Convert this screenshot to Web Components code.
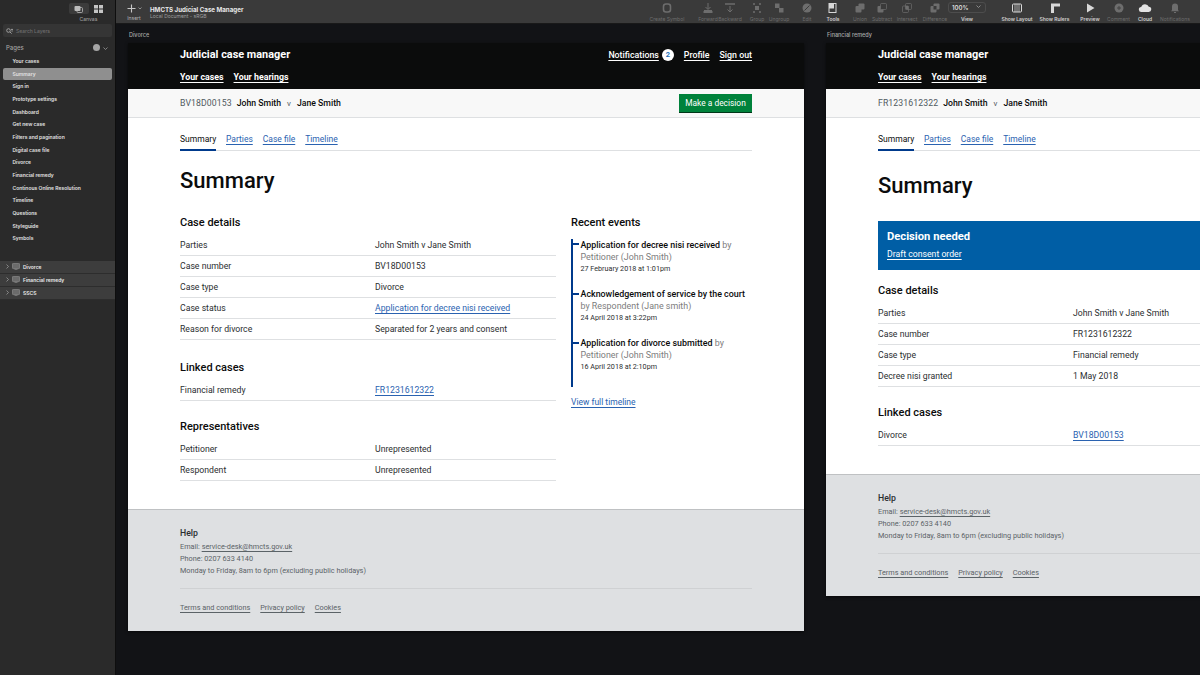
<!DOCTYPE html>
<html lang="en">
<head>
<meta charset="utf-8">
<title>HMCTS Judicial Case Manager</title>
<style>
  html, body { margin: 0; height: 100%; background: #121316; overflow: hidden; }
  body { font-family: Inter, "Liberation Sans", sans-serif; }
  .cols { display: flex; gap: 15px; align-items: flex-start; }
  .main { width: 376px; flex: none; display: flex; flex-direction: column; }
  .main.wide { width: 572px; }
  case-header { margin: 0 -52px; }
</style>
</head>
<body>
<sketch-app>
  <sketch-sidebar slot="side"></sketch-sidebar>
  <sketch-toolbar slot="top"></sketch-toolbar>
  <case-board slot="canvas" label="Divorce" style="left:12px">
    <case-header ref="BV18D00153" decision></case-header>
    <case-tabs title-top="16"></case-tabs>
    <div class="cols">
      <div class="main">
        <detail-list heading="Case details" rows='[["Parties","John Smith v Jane Smith"],["Case number","BV18D00153"],["Case type","Divorce"],["Case status","Application for decree nisi received","link"],["Reason for divorce","Separated for 2 years and consent"]]'></detail-list>
        <detail-list heading="Linked cases" rows='[["Financial remedy","FR1231612322","link"]]'></detail-list>
        <detail-list style="margin-top:17px" heading="Representatives" rows='[["Petitioner","Unrepresented"],["Respondent","Unrepresented"]]'></detail-list>
      </div>
      <recent-events></recent-events>
    </div>
    <case-footer slot="footer"></case-footer>
  </case-board>
  <case-board slot="canvas" label="Financial remedy" style="left:710px">
    <case-header ref="FR1231612322"></case-header>
    <case-tabs title-top="21"></case-tabs>
    <div class="cols">
      <div class="main wide">
        <decision-banner></decision-banner>
        <detail-list heading="Case details" rows='[["Parties","John Smith v Jane Smith"],["Case number","FR1231612322"],["Case type","Financial remedy"],["Decree nisi granted","1 May 2018"]]'></detail-list>
        <detail-list style="margin-top:17px" heading="Linked cases" rows='[["Divorce","BV18D00153","link"]]'></detail-list>
      </div>
    </div>
    <case-footer slot="footer"></case-footer>
  </case-board>
</sketch-app>

<script>
const font = 'Inter, "Liberation Sans", sans-serif';
const caseFont = 'Roboto, "Liberation Sans", sans-serif';
const linkBlue = "#2a62b0";

// small helper so each element is just styles + markup
function define(name, render) {
  customElements.define(name, class extends HTMLElement {
    constructor() {
      super();
      this.attachShadow({ mode: "open" });
    }
    connectedCallback() {
      this.shadowRoot.innerHTML = render(this);
    }
  });
}

define("sketch-app", () => `
<style>
  :host { display: grid; grid-template: 24px 1fr / 116px 1fr; width: 1200px; height: 675px; overflow: hidden; font-family: ${font}; }
  ::slotted([slot=side]) { grid-row: 1 / 3; }
  .canvas { position: relative; overflow: hidden; background: #121316; }
</style>
<slot name="side"></slot>
<slot name="top"></slot>
<div class="canvas"><slot name="canvas"></slot></div>`);

define("sketch-sidebar", () => {
  const pages = ["Your cases", "Summary", "Sign in", "Prototype settings", "Dashboard", "Get new case", "Filters and pagination", "Digital case file", "Divorce", "Financial remedy", "Continous Online Resolution", "Timeline", "Questions", "Styleguide", "Symbols"];
  const boards = ["Divorce", "Financial remedy", "SSCS"];
  return `
<style>
  :host { display: flex; flex-direction: column; background: #2a2a2a; border-right: 1px solid #0e0e0e; box-sizing: border-box; width: 116px; height: 675px; color: #dcdcdc; font-size: 5px; font-weight: 600; }
  .mode { height: 23px; display: grid; grid-template-columns: 20px 20px; justify-content: center; padding: 3px 0 0 62px; box-sizing: border-box; }
  .mode span { height: 11px; display: grid; place-items: center; border-radius: 2px; }
  .mode span.on { background: #3b3b3b; }
  .mode em { grid-column: 1 / 3; font-style: normal; font-weight: 500; color: #9c9c9c; text-align: center; margin-top: 1px; }
  .search { margin: 1px 3px 0; height: 13px; background: #353535; border-radius: 2px; display: flex; align-items: center; gap: 3px; padding-left: 3px; color: #6e6e6e; font-weight: 500; }
  .pages { display: flex; align-items: center; justify-content: space-between; padding: 2px 7px 0 6px; height: 16px; font-size: 6px; color: #a2a2a2; font-weight: 500; box-sizing: border-box; margin-top: 1px; }
  .pages i { display: inline-block; width: 7px; height: 7px; border-radius: 50%; background: #a5a5a5; margin-right: 3px; vertical-align: -1px; }
  ul { list-style: none; margin: 1px 0 0; padding: 0; }
  li { height: 12.67px; line-height: 12.67px; margin: 0 3px; padding-left: 9.5px; border-radius: 2px; color: #e2e2e2; white-space: nowrap; }
  li.sel { background: #8f8f8f; }
  .boards { margin-top: 16px; }
  .board { height: 13px; background: #3d3d3d; border-bottom: 1px solid #2d2d2d; box-sizing: border-box; display: flex; align-items: center; padding-left: 6px; gap: 3px; color: #ececec; }
  .board svg { flex: none; }
</style>
<div class="mode">
  <span class="on"><svg width="9" height="8" viewBox="0 0 9 8"><rect x="0.5" y="1" width="6" height="5" rx="1" fill="#bcbcbc"/><rect x="3" y="2.5" width="5.5" height="5" rx="1" fill="none" stroke="#bcbcbc" stroke-width=".8"/></svg></span>
  <span><svg width="9" height="8" viewBox="0 0 9 8" fill="#c4c4c4"><rect width="4" height="3.5"/><rect x="5" width="4" height="3.5"/><rect y="4.5" width="4" height="3.5"/><rect x="5" y="4.5" width="4" height="3.5"/></svg></span>
  <em>Canvas</em>
</div>
<div class="search">
  <svg width="7" height="6" viewBox="0 0 7 6" fill="none" stroke="#a8a8a8" stroke-width=".9"><circle cx="2.5" cy="2.5" r="1.8"/><path d="M4 4l1.6 1.6M5 1.4h2M5.4 3h1.4"/></svg>
  <span>Search Layers</span>
</div>
<div class="pages"><span>Pages</span><span><i></i><svg width="5" height="3" viewBox="0 0 5 3" fill="none" stroke="#9a9a9a" stroke-width=".8"><path d="M.5.5l2 2 2-2"/></svg></span></div>
<ul>${pages.map(p => `<li class="${p === "Summary" ? "sel" : ""}">${p}</li>`).join("")}</ul>
<div class="boards">
${boards.map(b => `<div class="board"><svg width="3" height="5" viewBox="0 0 3 5" fill="none" stroke="#a5a5a5" stroke-width=".7"><path d="M.5.5l2 2-2 2"/></svg><svg width="8" height="7" viewBox="0 0 8 7"><rect x=".4" y=".4" width="7.2" height="5.2" rx=".8" fill="#6b6b6b" stroke="#999" stroke-width=".6"/><path d="M2.5 6.6h3" stroke="#999" stroke-width=".6"/></svg><span>${b}</span></div>`).join("")}
</div>`;
});

const toolIcons = {
  symbol: `<rect x="3.5" y="2" width="7" height="8" rx="2.5" fill="none" stroke="currentColor" stroke-width="1.6"/>`,
  forward: `<path d="M7 1v6M4.5 5L7 7.5 9.5 5M2 10h10" fill="none" stroke="currentColor"/><rect x="3" y="8" width="8" height="3" fill="currentColor"/>`,
  backward: `<path d="M2 2h10" stroke="currentColor" stroke-width="1.5"/><path d="M7 4v6M4.5 7.5L7 10l2.5-2.5" fill="none" stroke="currentColor"/>`,
  group: `<path d="M3 2h2M9 2h2M3 10h2M9 10h2" stroke="currentColor" stroke-width="1.6"/><rect x="5" y="4" width="4" height="4" fill="currentColor"/>`,
  ungroup: `<rect x="3" y="1.5" width="4.5" height="4.5" fill="currentColor"/><rect x="7" y="6" width="4.5" height="4.5" fill="currentColor"/>`,
  edit: `<circle cx="7" cy="6" r="4.5" fill="currentColor"/><path d="M4.5 8.5l5-5" stroke="#3a3a3a"/>`,
  tools: `<rect x="3" y="1.5" width="7" height="9" fill="none" stroke="#d8d8d8"/><rect x="3" y="1.5" width="5" height="5" fill="#d8d8d8"/>`,
  union: `<rect x="2.5" y="4" width="6" height="6.5" rx="1" fill="currentColor"/><rect x="5.5" y="1.5" width="6" height="6" rx="1" fill="currentColor"/>`,
  subtract: `<rect x="2.5" y="4" width="6" height="6.5" rx="1" fill="currentColor"/><rect x="5.5" y="1.5" width="6" height="6" rx="1" fill="#3a3a3a" stroke="currentColor" stroke-width=".7"/>`,
  intersect: `<rect x="2.5" y="4" width="6" height="6.5" rx="1" fill="none" stroke="currentColor" stroke-width=".7"/><rect x="5.5" y="1.5" width="6" height="6" rx="1" fill="none" stroke="currentColor" stroke-width=".7"/><rect x="5.5" y="4" width="3" height="3.5" fill="currentColor"/>`,
  difference: `<rect x="2.5" y="4" width="6" height="6.5" rx="1" fill="currentColor"/><rect x="5.5" y="1.5" width="6" height="6" rx="1" fill="currentColor"/><rect x="5.5" y="4" width="3" height="3.5" fill="#3a3a3a"/>`,
  layout: `<rect x="2.5" y="2" width="9" height="8" rx="1" fill="#3a3a3a" stroke="#d8d8d8"/><path d="M5 2v8M7 2v8M9 2v8" stroke="#d8d8d8" stroke-width=".7"/>`,
  rulers: `<path d="M3 11V1.5h9v3H6V11z" fill="#d8d8d8"/>`,
  preview: `<path d="M4 1.5l7.5 4.5L4 10.5z" fill="#d8d8d8"/>`,
  comment: `<circle cx="7" cy="6" r="4.5" fill="currentColor"/><path d="M5 6h4M7 4v4" stroke="#3a3a3a" stroke-width=".8"/>`,
  cloud: `<path d="M3.5 10a2.5 2.5 0 0 1-.3-5A4 4 0 0 1 10.8 4.8 2.6 2.6 0 0 1 10.5 10z" fill="#e4e4e4"/>`,
  bell: `<path d="M7 1.5a3 3 0 0 1 3 3V8l1 1.2H3L4 8V4.5a3 3 0 0 1 3-3zM6 10h2v1H6z" fill="currentColor"/>`
};

define("sketch-toolbar", () => {
  // label, icon, width, margin-left, enabled
  const tools = [
    ["Create Symbol", "symbol", 40, 295],
    ["Forward", "forward", 22, 10],
    ["Backward", "backward", 22, 0],
    ["Group", "group", 22, 5],
    ["Ungroup", "ungroup", 22, 0],
    ["Edit", "edit", 22, 6],
    ["Tools", "tools", 22, 4, 1],
    ["Union", "union", 22, 5],
    ["Subtract", "subtract", 22, 0],
    ["Intersect", "intersect", 22, 3],
    ["Difference", "difference", 26, 4],
    ["View", "", 38, 0, 1],
    ["Show Layout", "layout", 32, 15, 1],
    ["Show Rulers", "rulers", 32, 5.5, 1],
    ["Preview", "preview", 24, 7.5, 1],
    ["Comment", "comment", 26, 3.5],
    ["Cloud", "cloud", 20, 3.5, 1],
    ["Notifications", "bell", 34, 3]
  ];
  return `
<style>
  :host { display: flex; height: 24px; background: #3a3a3a; box-sizing: border-box; border-bottom: 1px solid #191919; font-size: 5px; color: #777; }
  .insert { width: 32px; flex: none; display: flex; flex-direction: column; align-items: center; padding: 4px 0 0; margin-left: 2px; color: #b4b4b4; box-sizing: border-box; }
  .insert em { font-style: normal; margin-top: 2px; }
  .doc { flex: none; width: 202px; padding-top: 6px; box-sizing: border-box; color: #9f9f9f; }
  .doc b { display: block; font-size: 6.2px; line-height: 7px; color: #e8e8e8; font-weight: 700; }
  .doc span { line-height: 6px; display: block; }
  .tool { flex: none; display: flex; flex-direction: column; align-items: center; justify-content: flex-end; height: 23px; padding-bottom: 1.5px; box-sizing: border-box; white-space: nowrap; color: #6d6d6d; }
  .tool svg { margin-bottom: 2px; }
  .tool.on { color: #cfcfcf; font-weight: 600; }
  .zoom { width: 38px; height: 11px; box-sizing: border-box; border: 1px solid #4d4d4d; border-radius: 3px; margin-bottom: 2.5px; display: flex; justify-content: space-between; align-items: center; padding: 0 4px 0 3px; font-size: 6px; font-weight: 600; color: #dcdcdc; }
</style>
<div class="insert">
  <svg width="15" height="9" viewBox="0 0 15 9"><path d="M4.5 .5v8M.5 4.5h8" stroke="#c8c8c8" stroke-width="1.1"/><path d="M11.5 3.5l1.5 1.5 1.5-1.500" fill="none" stroke="#a5a5a5" stroke-width=".8"/></svg>
  <em>Insert</em>
</div>
<div class="doc"><b>HMCTS Judicial Case Manager</b><span>Local Document - sRGB</span></div>
${tools.map(([label, icon, width, left, on]) => {
    const body = icon
      ? `<svg width="14" height="12" viewBox="0 0 14 12">${toolIcons[icon]}</svg>`
      : `<div class="zoom"><span>100%</span><svg width="5" height="3" viewBox="0 0 5 3" fill="none" stroke="#a0a0a0" stroke-width=".8"><path d="M.5.5l2 2 2-2"/></svg></div>`;
    return `<div class="tool ${on ? "on" : ""}" style="width:${width}px;margin-left:${left}px">${body}<span>${label}</span></div>`;
  }).join("")}`;
});

define("case-board", (el) => `
<style>
  :host { position: absolute; top: 19px; display: flex; flex-direction: column; width: 676px; background: #fff; box-shadow: 0 1px 3px rgba(0,0,0,.6); color: #0b0c0c; font-family: ${caseFont}; }
  .label { position: absolute; top: -12px; left: 1px; font: 500 5.5px/8px ${font}; color: #a9a9a9; white-space: nowrap; }
  .body { padding: 0 52px 28px; }
</style>
<div class="label">${el.getAttribute("label")}</div>
<div class="body"><slot></slot></div>
<slot name="footer"></slot>`);

define("case-header", (el) => `
<style>
  :host { display: block; }
  .black { background: #0b0c0c; height: 46px; padding: 0 52px; color: #fff; display: grid; grid-template-columns: 1fr auto; grid-template-rows: 23px 23px; align-items: center; }
  .brand { font-size: 10.9px; font-weight: 700; }
  .top, .nav { display: flex; gap: 10px; font-size: 8.8px; font-weight: 500; align-items: center; }
  .nav { font-weight: 700; grid-column: 1 / 3; margin-top: -1px; }
  span.l { text-decoration: underline; text-underline-offset: 1.5px; text-decoration-thickness: 1px; }
  .badge { width: 12px; height: 12px; border-radius: 50%; background: #fff; color: #1d70b8; font-size: 7.5px; font-weight: 700; display: inline-grid; place-items: center; margin-left: -7px; }
  .bar { height: 28px; background: #f8f8f8; border-bottom: 1px solid #dee0e2; padding: 0 52px; display: flex; align-items: center; font-size: 8.7px; font-weight: 500; }
  .ref { color: #505a5f; font-weight: 400; margin-right: 5px; letter-spacing: .1px; }
  .v { color: #505a5f; font-weight: 400; margin: 0 6px; font-size: 8px; }
  button { margin-left: auto; height: 18px; width: 73px; border: 0; padding: 0; background: #00823b; color: #fff; font: 400 8.4px ${caseFont}; box-shadow: 0 1px 0 #003618; }
</style>
<div class="black">
  <div class="brand">Judicial case manager</div>
  ${el.hasAttribute("decision") ? `<div class="top"><span class="l">Notifications</span><span class="badge">2</span><span class="l">Profile</span><span class="l">Sign out</span></div>` : `<div></div>`}
  <div class="nav"><span class="l">Your cases</span><span class="l">Your hearings</span></div>
</div>
<div class="bar">
  <span class="ref">${el.getAttribute("ref")}</span><span>John Smith</span><span class="v">v</span><span>Jane Smith</span>
  ${el.hasAttribute("decision") ? `<button>Make a decision</button>` : ""}
</div>`);

define("case-tabs", (el) => `
<style>
  :host { display: block; }
  .tabs { display: flex; gap: 10px; border-bottom: 1px solid #dee0e2; height: 33px; align-items: center; padding-top: 10px; box-sizing: border-box; font-size: 8.5px; color: ${linkBlue}; }
  .tabs span { text-decoration: underline; text-underline-offset: 1.5px; text-decoration-thickness: .6px; line-height: 21px; }
  .tabs .on { color: #0b0c0c; text-decoration: none; border-bottom: 2px solid #003a8c; height: 23px; margin-bottom: -1px; padding-top: 1px; box-sizing: border-box; line-height: 20px; width: 36px; white-space: nowrap; }
  h1 { margin: ${+el.getAttribute("title-top") + 1}px 0 1px; font-size: 22px; line-height: 26px; font-weight: 500; }
</style>
<div class="tabs"><span class="on">Summary</span><span>Parties</span><span>Case file</span><span>Timeline</span></div>
<h1>Summary</h1>`);

define("detail-list", (el) => {
  const rows = JSON.parse(el.getAttribute("rows"));
  return `
<style>
  :host { display: block; margin-top: 19px; }
  h2 { margin: 0 0 4px; font-size: 11px; line-height: 17px; font-weight: 500; }
  .row { display: grid; grid-template-columns: 195px 1fr; height: 21px; align-items: center; border-bottom: 1px solid #dee0e2; box-sizing: border-box; font-size: 8.7px; color: #2b2e30; }
  a { color: ${linkBlue}; text-decoration: underline; text-underline-offset: 1.5px; text-decoration-thickness: .6px; }
</style>
<h2>${el.getAttribute("heading")}</h2>
${rows.map(([k, v, link]) => `<div class="row"><span>${k}</span><span>${link ? `<a>${v}</a>` : v}</span></div>`).join("")}`;
});

define("recent-events", () => {
  const events = [
    ["Application for decree nisi received", "by", "Petitioner (John Smith)", "27 February 2018 at 1:01pm"],
    ["Acknowledgement of service by the court", "", "by Respondent (Jane smith)", "24 April 2018 at 3:22pm"],
    ["Application for divorce submitted", "by", "Petitioner (John Smith)", "16 April 2018 at 2:10pm"]
  ];
  return `
<style>
  :host { display: block; flex: 1; margin-top: 19px; font-size: 8.9px; }
  h2 { margin: 0; font-size: 11px; line-height: 17px; font-weight: 500; }
  ol { list-style: none; margin: 12px 0 0; padding: 0 0 1px; border-left: 2px solid #003a8c; }
  li { position: relative; padding: 0 0 13px 7.5px; line-height: 12px; color: #7d7d7d; }
  li:first-child { margin-top: -4px; }
  li::before { content: ""; position: absolute; left: 0; top: 5px; width: 6px; height: 2px; background: #003a8c; }
  li:first-child::before { top: 4px; }
  b { font-weight: 500; color: #0b0c0c; }
  small { display: block; font-size: 7.2px; line-height: 12px; color: #2b2e30; }
  a { display: block; line-height: 12px; margin-top: 9px; font-size: 8.5px; color: ${linkBlue}; text-decoration: underline; text-underline-offset: 1.5px; text-decoration-thickness: .6px; }
</style>
<h2>Recent events</h2>
<ol>${events.map(([title, by, who, when]) => `<li><b>${title}</b> ${by} ${who}<small>${when}</small></li>`).join("")}</ol>
<a>View full timeline</a>`;
});

define("decision-banner", () => `
<style>
  :host { display: block; margin: 21px 0 -7px; background: #005ea5; color: #fff; height: 49px; padding: 8px 9px 0; box-sizing: border-box; }
  h2 { margin: 0; font-size: 11.2px; line-height: 16px; font-weight: 700; }
  a { display: block; font-size: 8.7px; line-height: 13px; margin-top: 3px; text-decoration: underline; text-underline-offset: 1.5px; }
</style>
<h2>Decision needed</h2>
<a>Draft consent order</a>`);

define("case-footer", () => `
<style>
  :host { display: block; background: #dee0e2; border-top: 1px solid #bfc1c3; padding: 16px 52px 18px; color: #5b6367; font-size: 7.3px; }
  b { display: block; font-size: 8.7px; font-weight: 500; line-height: 15px; color: #2b2e30; }
  p { margin: 0; line-height: 12px; }
  .links { display: flex; gap: 10px; margin-top: 11px; padding-top: 13px; border-top: 1px solid #cfd1d3; line-height: 11px; }
  u { text-underline-offset: 1.5px; text-decoration-thickness: .6px; }
</style>
<b>Help</b>
<p>Email: <u>service-desk@hmcts.gov.uk</u></p>
<p>Phone: 0207 633 4140</p>
<p>Monday to Friday, 8am to 6pm (excluding public holidays)</p>
<div class="links"><u>Terms and conditions</u><u>Privacy policy</u><u>Cookies</u></div>`);
</script>
</body>
</html>
